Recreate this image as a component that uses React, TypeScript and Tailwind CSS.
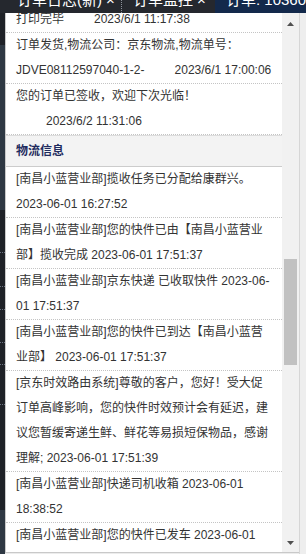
import React from "react";

function Row({ children, last }: { children: React.ReactNode; last?: boolean }) {
  return (
    <div
      className={`pl-[10px] pr-[8px] leading-[25px] ${
        last ? "" : "border-b border-dotted border-[#c4c4c4]"
      }`}
    >
      {children}
    </div>
  );
}

function Stamp({ children }: { children: React.ReactNode }) {
  return <span className="inline-block ml-[30px] whitespace-nowrap">{children}</span>;
}

function D({ children }: { children: React.ReactNode }) {
  return <span className="whitespace-nowrap">{children}</span>;
}

function Arrow({ down }: { down?: boolean }) {
  return (
    <svg width="7" height="4" viewBox="0 0 7 4">
      <polygon points={down ? "0,0 7,0 3.5,4" : "3.5,0 7,4 0,4"} fill="#505050" />
    </svg>
  );
}

export default function App() {
  return (
    <div className="w-[306px] h-[554px] overflow-hidden flex flex-col bg-[#ececec] font-['Liberation_Sans','Noto_Sans_CJK_SC',sans-serif] text-[12px] text-[#333]">
      {/* tab bar, cut off at the top */}
      <div className="h-[13px] shrink-0 flex overflow-hidden text-white text-[15px]">
        <div className="w-[122px] bg-[#25282e] border-r border-dotted border-[#8d939c]">
          <div className="-mt-[10px] leading-[20px] pl-[17px] flex gap-[4px] whitespace-nowrap">
            <span>订单日志(新)</span>
            <span>×</span>
          </div>
        </div>
        <div className="w-[93px] bg-[#25282e]">
          <div className="-mt-[10px] leading-[20px] pl-[11px] flex gap-[4px] whitespace-nowrap">
            <span>订单监控</span>
            <span>×</span>
          </div>
        </div>
        <div className="flex-1 bg-[#13294b] overflow-hidden">
          <div className="-mt-[10px] leading-[20px] pl-[11px] whitespace-nowrap">订单: 1036012</div>
        </div>
      </div>

      <div className="flex flex-1 min-h-0">
        {/* sidebar behind */}
        <div className="w-[5px] flex flex-col">
          <div className="h-[32px] bg-[#1e2127]" />
          <div className="h-[165px] bg-[#2e3843]" />
          <div className="flex-1 bg-[#1e2127] flex flex-col">
            <div className="h-[43px] border-b border-dotted border-[#6b7380]" />
            <div className="h-[34px] border-b border-dotted border-[#6b7380]" />
            <div className="h-[23px] border-b border-dotted border-[#6b7380]" />
            <div className="h-[33px] border-b border-dotted border-[#6b7380]" />
            <div className="h-[22px] border-b border-dotted border-[#6b7380]" />
            <div className="h-[40px] border-b border-dotted border-[#6b7380]" />
          </div>
          <div className="h-[44px] bg-[#2e3843]" />
        </div>

        {/* panel */}
        <div className="flex h-[540px] border-l border-b border-[#c9c9c9]">
          <div className="w-[276px] bg-white overflow-hidden">
            <div className="-mt-[6px]">
              <Row>
                打印完毕<Stamp>2023/6/1 11:17:38</Stamp>
              </Row>
              <Row>
                订单发货,物流公司：京东物流,物流单号：JDVE08112597040-1-2-<Stamp>2023/6/1 17:00:06</Stamp>
              </Row>
              <Row>
                您的订单已签收，欢迎下次光临！<Stamp>2023/6/2 11:31:06</Stamp>
              </Row>

              <div className="h-[32px] border-t border-b border-t-[#dcdcdc] border-b-[#cccccc] bg-[#f3f3f3] pl-[10px] leading-[30px] font-bold text-[#1f2b5e]">
                物流信息
              </div>

              <Row>
                [南昌小蓝营业部]揽收任务已分配给康群兴。 <D>2023-06-01</D> 16:27:52
              </Row>
              <Row>
                [南昌小蓝营业部]您的快件已由【南昌小蓝营业部】揽收完成 <D>2023-06-01</D> 17:51:37
              </Row>
              <Row>
                [南昌小蓝营业部]京东快递 已收取快件 2023-06-<wbr />01 17:51:37
              </Row>
              <Row>
                [南昌小蓝营业部]您的快件已到达【南昌小蓝营业部】 <D>2023-06-01</D> 17:51:37
              </Row>
              <Row>
                [京东时效路由系统]尊敬的客户，您好！受大促订单高峰影响，您的快件时效预计会有延迟，建议您暂缓寄递生鲜、鲜花等易损短保物品，感谢理解; <D>2023-06-01</D> 17:51:39
              </Row>
              <Row>
                [南昌小蓝营业部]快递司机收箱 <D>2023-06-01</D> 18:38:52
              </Row>
              <Row last>
                [南昌小蓝营业部]您的快件已发车 <D>2023-06-01</D> 19:12:05
              </Row>
            </div>
          </div>

          {/* scrollbar */}
          <div className="w-[17px] bg-[#f1f1f1] flex flex-col">
            <div className="h-[17px] flex justify-center pt-[9px]">
              <Arrow />
            </div>
            <div className="h-[229px]" />
            <div className="mx-[2px] h-[106px] bg-[#c1c1c1]" />
            <div className="flex-1" />
            <div className="h-[17px] flex justify-center pt-[6px]">
              <Arrow down />
            </div>
          </div>
        </div>

        <div className="flex-1 border-l border-[#d6d6d6] bg-[#eeeeee]" />
      </div>
    </div>
  );
}
